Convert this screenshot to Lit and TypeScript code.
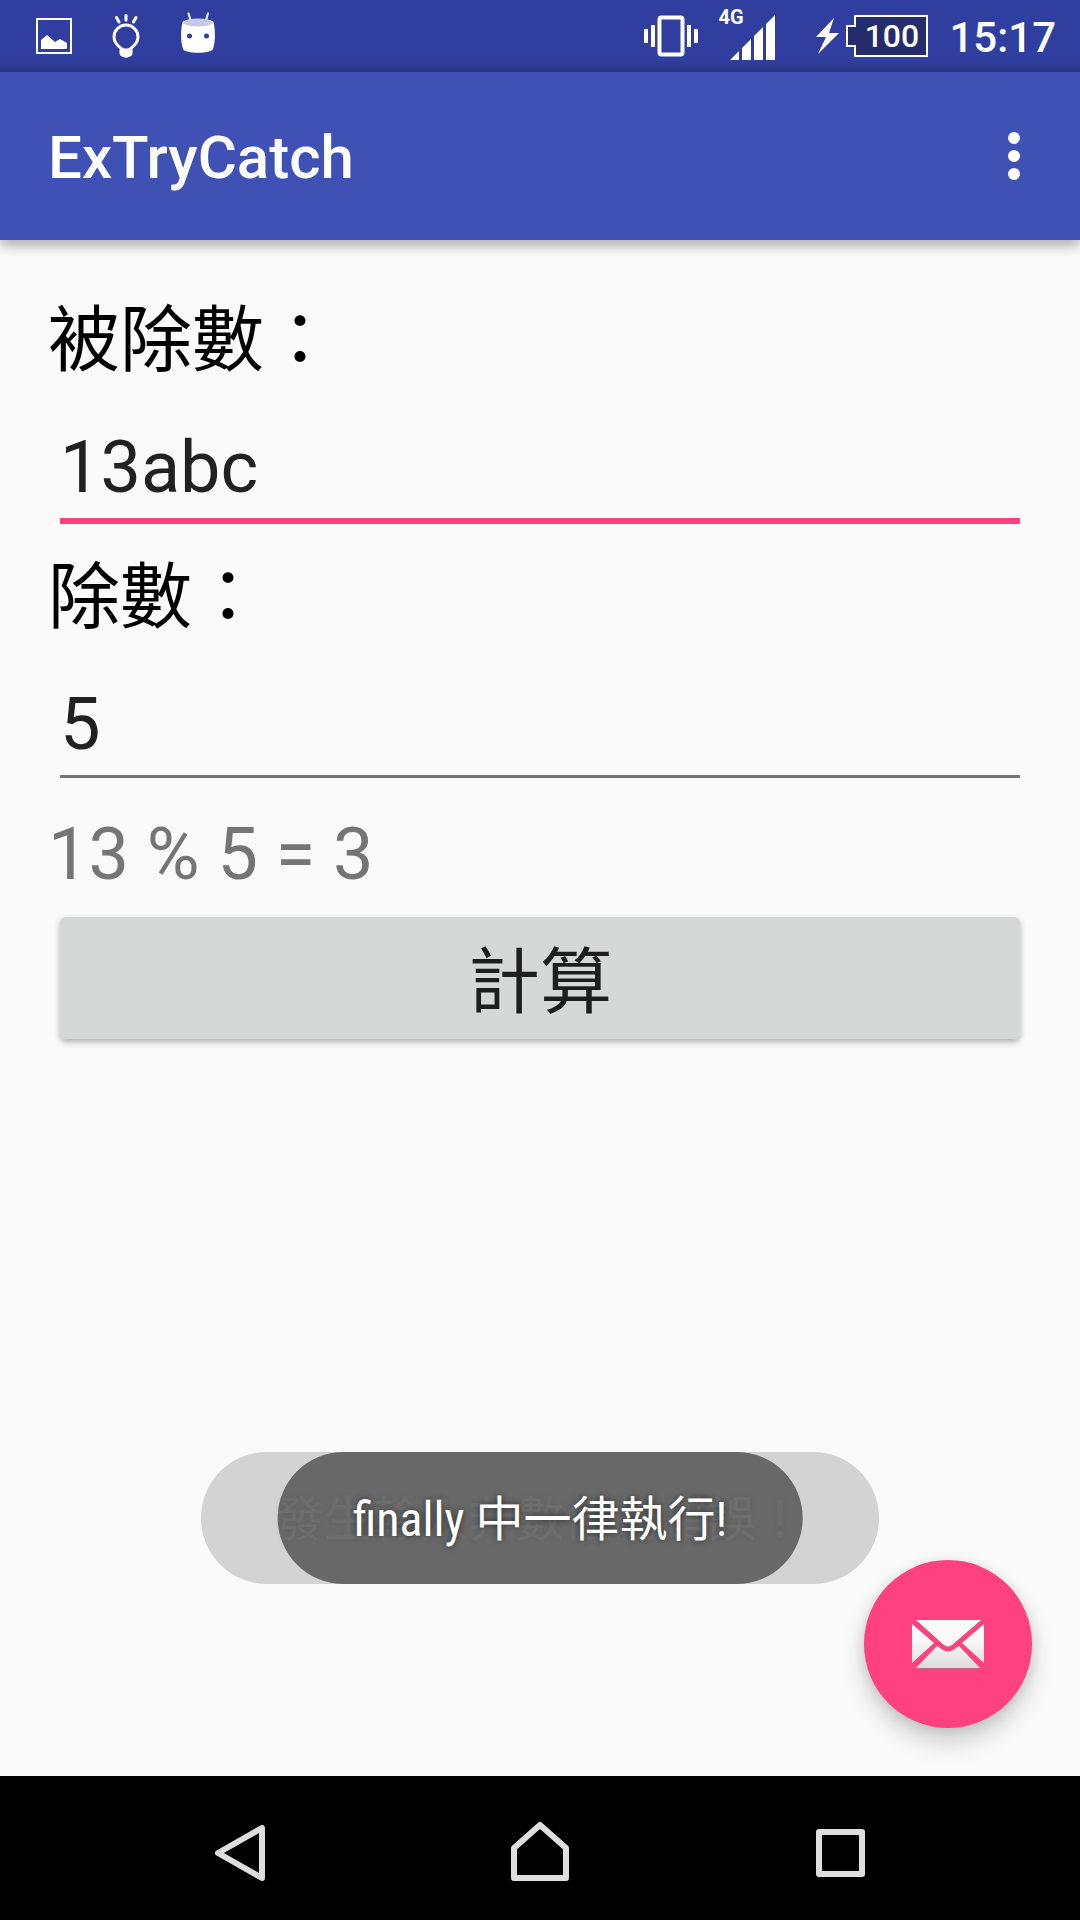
import { LitElement, html, css, svg } from "lit";
import { customElement, state } from "lit/decorators.js";

@customElement("status-bar")
class StatusBar extends LitElement {
  static styles = css`
    :host {
      display: flex;
      align-items: center;
      justify-content: space-between;
      height: 72px;
      padding: 0 24px 0 36px;
      box-sizing: border-box;
      color: #fff;
      background: linear-gradient(#303f9f 0 60px, #2b3585 72px);
      font-family: Roboto, "Noto Sans", sans-serif;
      font-weight: 500;
    }
    .group {
      display: flex;
      align-items: center;
    }
    .notices {
      gap: 36px;
    }
    svg {
      display: block;
      fill: #fff;
    }
    .signal {
      position: relative;
      margin: 0 34px 0 20px;
    }
    .net {
      position: absolute;
      left: 0;
      top: 5px;
      font-size: 20px;
      font-weight: 700;
      line-height: 24px;
    }
    .battery {
      position: relative;
    }
    .level {
      position: absolute;
      left: 46px;
      right: 0;
      top: 0;
      text-align: center;
      font-size: 32px;
      line-height: 72px;
    }
    .clock {
      margin-left: 21px;
      padding-top: 4px;
      font-size: 42px;
      line-height: 68px;
    }
  `;

  render() {
    return html`
      <div class="group notices">
        <svg width="36" height="72" viewBox="0 0 36 72" aria-hidden="true">
          <rect x="1" y="19" width="34" height="34" fill="none" stroke="#fff" stroke-width="2" />
          <path d="M5 49V40L11 35L19 42L24 39L31 43V49Z" />
        </svg>
        <svg width="36" height="72" viewBox="0 0 36 72" aria-hidden="true">
          <g fill="none" stroke="#fff" stroke-width="3" stroke-linecap="round">
            <path d="M18 15.500V20M8.500 17.500L11 22M28 17.500L25.500 22" />
            <path d="M13.500 48.500C9 46 6 41 6 37A12 12 0 0 1 30 37C30 41 27 46 22.500 48.500" />
          </g>
          <path d="M11.500 47Q18 50 24.500 47V54Q24 56 21 57Q18 58.500 15 57Q12 56 11.500 54Z" />
        </svg>
        <svg width="36" height="72" viewBox="0 0 36 72" aria-hidden="true">
          <path d="M8.500 13.500L10.500 20M28 13.500L26 20" stroke="#fff" stroke-width="2" stroke-linecap="round" />
          <path d="M2.500 22C6 18 31 18 33.500 22C35.500 31 35.500 41 33 49C31 54 5 54 3 49C.500 41 .500 31 2.500 22Z" />
          <ellipse cx="18" cy="22.500" rx="14.500" ry="4" fill="#c5cae9" />
          <circle cx="9.500" cy="36" r="2.500" fill="#303f9f" />
          <circle cx="26.500" cy="36" r="2.500" fill="#303f9f" />
        </svg>
      </div>
      <div class="group">
        <svg width="54" height="72" viewBox="0 0 54 72" aria-hidden="true">
          <rect x="15.500" y="17.500" width="23" height="37" rx="2" fill="none" stroke="#fff" stroke-width="4" />
          <path d="M0 29H4V43H0ZM7 25H11V47H7ZM43 25H47V47H43ZM50 29H54V43H50Z" />
        </svg>
        <div class="signal">
          <svg width="57" height="72" viewBox="0 0 57 72" aria-hidden="true">
            <path d="M12 60L21 51V60ZM24 48L33 39V60H24ZM36 36L45 27V60H36ZM48 24L57 15V60H48Z" />
          </svg>
          <span class="net">4G</span>
        </div>
        <div class="battery">
          <svg width="119" height="72" viewBox="0 0 119 72" aria-hidden="true">
            <path d="M25 18L7 37H17L9 54L30 33H20Z" />
            <path d="M46 16H118V56H46V46H38V26H46Z" fill="#242c6b" stroke="#fff" stroke-width="2" />
          </svg>
          <span class="level">100</span>
        </div>
        <time class="clock" datetime="15:17">15:17</time>
      </div>
    `;
  }
}

@customElement("app-bar")
class AppBar extends LitElement {
  static styles = css`
    :host {
      position: relative;
      display: flex;
      align-items: center;
      justify-content: space-between;
      height: 168px;
      padding: 0 30px 0 48px;
      box-sizing: border-box;
      color: #fff;
      background: #3f51b5;
      box-shadow: 0 6px 12px rgba(0, 0, 0, 0.3);
      clip-path: inset(0 0 -24px 0);
      font-family: Roboto, "Noto Sans", sans-serif;
    }
    h1 {
      margin: 0;
      padding-top: 4px;
      font-size: 60px;
      line-height: 72px;
      font-weight: 500;
    }
    button {
      border: 0;
      padding: 0;
      background: none;
    }
    svg {
      display: block;
      fill: #fff;
    }
  `;

  render() {
    return html`
      <h1>ExTryCatch</h1>
      <button aria-label="More options">
        <svg width="72" height="72" viewBox="0 0 72 72">
          <circle cx="36" cy="18" r="6" />
          <circle cx="36" cy="36" r="6" />
          <circle cx="36" cy="54" r="6" />
        </svg>
      </button>
    `;
  }
}

@customElement("nav-bar")
class NavBar extends LitElement {
  static styles = css`
    :host {
      display: flex;
      justify-content: center;
      gap: 156px;
      height: 144px;
      background: #000;
    }
    button {
      width: 144px;
      padding: 0;
      border: 0;
      background: none;
    }
    svg {
      display: block;
      margin: 0 auto;
      fill: none;
      stroke: #dedede;
      stroke-width: 6;
      stroke-linejoin: round;
    }
  `;

  render() {
    const button = (label: string, shape: unknown) => html`
      <button aria-label=${label}>
        <svg width="144" height="144" viewBox="0 0 144 144">${shape}</svg>
      </button>
    `;
    return html`
      ${button("Back", svg`<path d="M50 77L94 52V102Z" />`)}
      ${button("Home", svg`<path d="M46 102V72L72 49L98 72V102Z" />`)}
      ${button("Recent apps", svg`<rect x="51" y="56" width="43" height="42" />`)}
    `;
  }
}

@customElement("app-root")
class AppRoot extends LitElement {
  static styles = css`
    :host {
      display: flex;
      flex-direction: column;
      min-height: 100vh;
      background: #fafafa;
      font-family: Roboto, "Noto Sans CJK TC", sans-serif;
      font-size: 72px;
    }
    main {
      position: relative;
      flex: 1;
      display: flex;
      flex-direction: column;
      padding: 48px;
    }
    label {
      line-height: 106px;
      color: #000;
    }
    input {
      min-width: 0;
      height: 94px;
      margin: 0 12px 21px;
      padding: 26px 0 4px;
      border: 0;
      border-bottom: 3px solid #757575;
      border-radius: 0;
      outline: 0;
      background: none;
      color: #212121;
      font: inherit;
      line-height: 84px;
    }
    input.active {
      border-bottom: 6px solid #ff4081;
    }
    output {
      line-height: 112px;
      color: #757575;
    }
    .calc {
      margin: 6px 12px 0;
      padding: 10px 0 0;
      border: 0;
      border-radius: 6px;
      background: #d6d7d7;
      box-shadow: 0 3px 6px rgba(0, 0, 0, 0.3);
      color: #1e1e1e;
      font: inherit;
      line-height: 112px;
    }
    .toast {
      position: absolute;
      left: 50%;
      bottom: 192px;
      transform: translateX(-50%);
      padding: 4px 75px 0;
      border-radius: 66px;
      font-family: "Roboto Condensed", Roboto, "Noto Sans CJK TC", sans-serif;
      font-size: 48px;
      line-height: 128px;
      white-space: nowrap;
    }
    .fading {
      background: #d3d3d3;
      color: #f4f4f4;
      text-shadow: 0 0 8px rgba(0, 0, 0, 0.2);
    }
    .shown {
      background: rgba(86, 86, 86, 0.86);
      color: #fff;
      text-shadow: 0 0 6px rgba(0, 0, 0, 0.6);
    }
    .mail {
      position: absolute;
      right: 48px;
      bottom: 48px;
      width: 168px;
      height: 168px;
      padding: 0;
      border: 0;
      border-radius: 50%;
      background: #ff4081;
      box-shadow: 0 14px 24px rgba(0, 0, 0, 0.18), 0 2px 12px rgba(0, 0, 0, 0.1);
    }
    .mail svg {
      display: block;
      margin: 0 auto;
    }
  `;

  @state() private dividend = "13abc";
  @state() private divisor = "5";
  @state() private result = "13 % 5 = 3";

  private calculate() {
    const a = Number(this.dividend);
    const b = Number(this.divisor);
    if (Number.isInteger(a) && Number.isInteger(b) && b !== 0) {
      this.result = `${a} % ${b} = ${a % b}`;
    }
  }

  render() {
    return html`
      <status-bar></status-bar>
      <app-bar></app-bar>
      <main>
        <label for="dividend">被除數：</label>
        <input
          id="dividend"
          class="active"
          .value=${this.dividend}
          @input=${(e: Event) => (this.dividend = (e.target as HTMLInputElement).value)}
        />
        <label for="divisor">除數：</label>
        <input
          id="divisor"
          .value=${this.divisor}
          @input=${(e: Event) => (this.divisor = (e.target as HTMLInputElement).value)}
        />
        <output for="dividend divisor">${this.result}</output>
        <button class="calc" @click=${this.calculate}>計算</button>
        <div class="toast fading">發生輸入非數值的錯誤！</div>
        <div class="toast shown" role="status">finally 中一律執行!</div>
        <button class="mail" aria-label="Mail">
          <svg width="72" height="72" viewBox="0 0 72 72">
            <defs>
              <linearGradient id="paper" x1="0" y1="12" x2="0" y2="60" gradientUnits="userSpaceOnUse">
                <stop offset="0.400" stop-color="#fafafa" />
                <stop offset="1" stop-color="#dcdcdc" />
              </linearGradient>
            </defs>
            <g fill="url(#paper)">
              <path d="M4 12H69L40 37Q36 40 32 37Z" />
              <path d="M0 16L22 35L0 55Z" />
              <path d="M72 16L50 35L72 55Z" />
              <path d="M4 60L25 38L31 42Q36 45 41 42L47 38L68 60Z" />
            </g>
            <path d="M4 60.500H68M69 13L40 38Q36 41 32 38L4 13" fill="none" stroke="#888" stroke-opacity="0.500" />
          </svg>
        </button>
      </main>
      <nav-bar></nav-bar>
    `;
  }
}
